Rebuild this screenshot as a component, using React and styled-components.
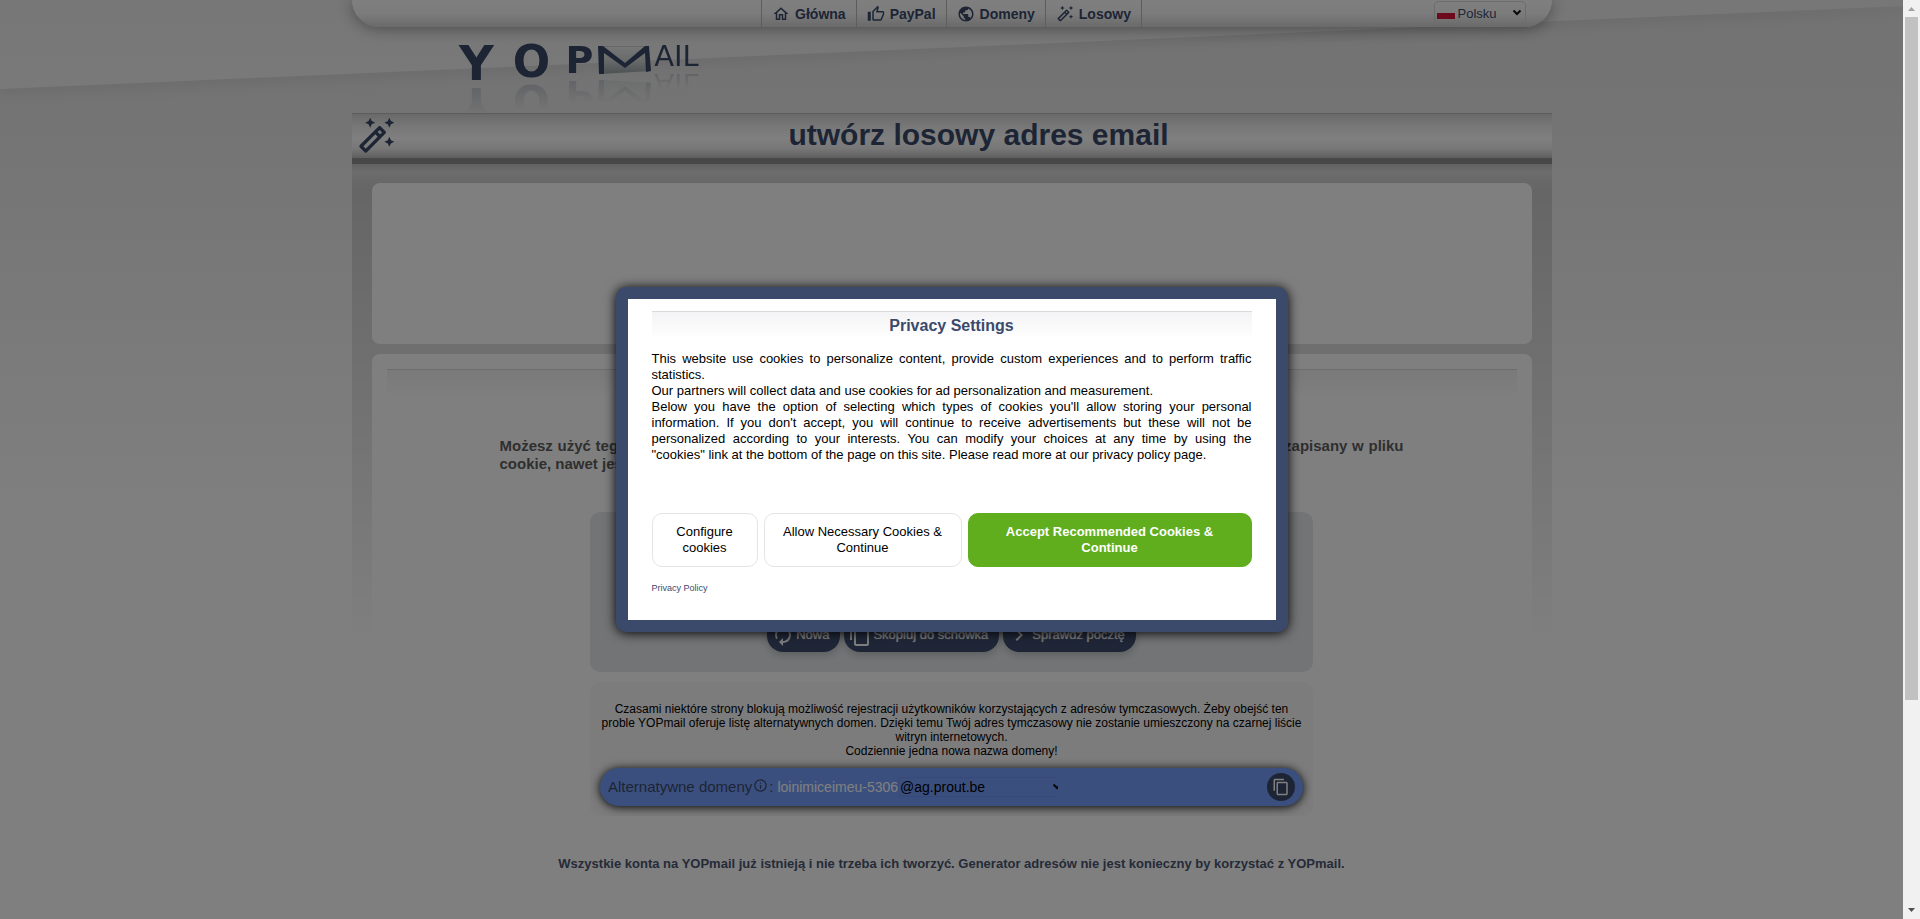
import React from "react";
import styled, { createGlobalStyle } from "styled-components";
import {
  MdAutorenew,
  MdChevronRight,
  MdContentCopy,
  MdInfoOutline,
  MdOutlineAutoFixHigh,
  MdOutlineHome,
  MdOutlineThumbUp,
  MdPublic,
} from "react-icons/md";

const navy = "#3b4a6b";

const GlobalStyle = createGlobalStyle`
  *, *::before, *::after { box-sizing: border-box; }
  body {
    margin: 0;
    font-family: "Liberation Sans", Arial, sans-serif;
    color: #000;
    overflow: hidden;
  }
  button, select { font-family: inherit; }
  p, h1, h2 { margin: 0; }
`;

const Window = styled.div`
  display: grid;
  grid-template-columns: minmax(0, 1fr) 17px;
  height: 100vh;
`;

const Page = styled.div`
  position: relative;
  isolation: isolate;
  display: flex;
  flex-direction: column;
  overflow: hidden;
  background: linear-gradient(#e6e6e6 0, #e8e8e8 110px, #fff 520px);
`;

const Slant = styled.div`
  position: absolute;
  inset: 0 0 auto;
  z-index: -1;
  filter: drop-shadow(0 6px 6px rgba(0, 0, 0, 0.06));

  &::before {
    content: "";
    display: block;
    height: 89px;
    background: linear-gradient(#eee, #f3f3f3);
    clip-path: polygon(0 0, 100% 0, 100% 6px, 0 100%);
  }
`;

const Column = styled.div`
  width: 100%;
  max-width: 1200px;
  margin: 0 auto;
  flex: 1;
  display: flex;
  flex-direction: column;
`;

const TopBar = styled.header`
  display: grid;
  grid-template-columns: 1fr auto 1fr;
  height: 27px;
  flex: none;
  padding: 0 26px;
  border-radius: 0 0 28px 28px;
  background: linear-gradient(#fff, #f8f8f8 50%, #d4d4d4);
  box-shadow: 0 1px 16px rgba(0, 0, 0, 0.4);
`;

const Nav = styled.nav`
  grid-column: 2;
  display: flex;
  border-left: 1px solid #bbb;
`;

const NavLink = styled.a`
  display: flex;
  align-items: center;
  gap: 5px;
  padding: 0 10px;
  border-right: 1px solid #bbb;
  color: ${navy};
  font-size: 14px;
  font-weight: bold;
  text-decoration: none;
`;

const Language = styled.label`
  justify-self: end;
  display: flex;
  align-items: center;
  width: 92px;
  height: 24px;
  margin-top: 1px;
  padding: 0 2px;
  border: 1px solid #dadada;
  border-radius: 4px;
`;

const Flag = styled.span`
  width: 18px;
  height: 12px;
  background: linear-gradient(transparent 50%, #dc143c 50%);
`;

const LanguageSelect = styled.select`
  flex: 1;
  min-width: 0;
  appearance: none;
  border: 0;
  padding: 0 0 0 3px;
  background: none;
  color: ${navy};
  font-size: 13px;
`;

const LogoLink = styled.a`
  display: flex;
  align-items: flex-start;
  height: 86px;
  flex: none;
  padding: 19px 0 0 100px;
  overflow: hidden;
  color: ${navy};
  text-decoration: none;
`;

const LogoPart = styled.span`
  display: block;
  width: ${(p) => p.$width}px;
  font-family: "DejaVu Sans", Verdana, sans-serif;
  font-size: ${(p) => p.$size}px;
  font-weight: ${(p) => (p.$light ? "normal" : "bold")};
  line-height: ${(p) => p.$height}px;
  height: ${(p) => p.$height}px;
  text-align: center;
  -webkit-box-reflect: below 6px
    linear-gradient(transparent 20%, rgba(0, 0, 0, 0.2));

  svg { display: block; }
`;

const TitleBar = styled.div`
  display: grid;
  grid-template-columns: 54px 1fr;
  align-items: center;
  height: 51px;
  flex: none;
  border-top: 1px solid #bbb;
  border-bottom: 6px solid #909090;
  background: linear-gradient(#d4d4d4, #f0f0f0 30%, #fff 55%, #f0f0f0 78%, #bebebe);
  color: ${navy};

  svg { margin-left: 4px; }
`;

const Title = styled.h1`
  padding-bottom: 2px;
  font-size: 30px;
  line-height: 34px;
  text-align: center;
`;

const Content = styled.main`
  flex: 1;
  display: flex;
  flex-direction: column;
  gap: 10px;
  padding: 19px 20px 0;
  background: linear-gradient(#c4c4c4 0, #dadada 8px, #d2d2d2 16px, #ccc 26px, #fff 482px);
`;

const AdSlot = styled.section`
  height: 161px;
  flex: none;
  border-radius: 8px;
  background: #fff;
`;

const Card = styled.section`
  flex: 1;
  display: flex;
  flex-direction: column;
  padding: 15px;
  border-radius: 8px 8px 0 0;
  background: #fff;
`;

const SectionHead = styled.h2`
  height: 25px;
  flex: none;
  border-top: 1px solid #d8dade;
  background: linear-gradient(#f4f4f6, #fdfdfd);
  color: ${navy};
  font-size: 16px;
  line-height: 27px;
  text-align: center;
`;

const Intro = styled.p`
  width: 100%;
  max-width: 904px;
  margin: 43px auto 39px;
  color: #5f5f5f;
  font-size: 15px;
  font-weight: bold;
  line-height: 18px;
  text-align: justify;
`;

const Panel = styled.div`
  width: 100%;
  max-width: 723px;
  margin: 0 auto 10px;
  border-radius: 10px;
`;

const AddressPanel = styled(Panel)`
  display: flex;
  align-items: flex-end;
  justify-content: center;
  gap: 4px;
  height: 160px;
  padding-bottom: 20px;
  background: #e6e9ed;
`;

const ActionButton = styled.button`
  display: flex;
  align-items: center;
  gap: 1px;
  height: 35px;
  padding: 0 11px 0 4px;
  border: 0;
  border-radius: 16px;
  background: linear-gradient(#4a5b82, ${navy});
  color: #fff;
  font-size: 13px;
  text-shadow: 0 0 1px #fff;
  box-shadow: 0 3px 8px rgba(0, 0, 0, 0.2);
`;

const DomainPanel = styled(Panel)`
  padding: 20px 10px 10px;
  background: #f8f8f8;
  text-align: center;
  font-size: 12px;
  line-height: 14px;
`;

const DomainBar = styled.div`
  display: flex;
  align-items: center;
  height: 38px;
  margin-top: 10px;
  padding: 0 8px;
  border-radius: 19px;
  background: #769fff;
  box-shadow: 0 1px 10px #000;
`;

const DomainLabel = styled.label`
  display: flex;
  align-items: center;
  gap: 1px;
  color: ${navy};
  font-size: 15px;

  svg { margin-bottom: 4px; }
`;

const Login = styled.span`
  padding: 0 0 0 4px;
  color: #fff;
  font-size: 14px;
`;

const DomainPicker = styled.span`
  display: flex;
  align-items: center;
  width: 160px;
  height: 20px;
  overflow: hidden;
  border: 1px solid #6c93f2;
  border-right: 0;
  border-radius: 4px 0 0 4px;

  svg { flex: none; margin-right: -5px; }
`;

const DomainSelect = styled.select`
  flex: 1;
  min-width: 0;
  appearance: none;
  border: 0;
  padding: 0 0 0 1px;
  background: none;
  color: #000;
  font-size: 14px;
`;

const RoundButton = styled.button`
  display: flex;
  align-items: center;
  justify-content: center;
  width: 28px;
  height: 28px;
  margin-left: auto;
  padding: 0;
  border: 0;
  border-radius: 50%;
  background: ${navy};
  color: #fff;
`;

const Closing = styled.p`
  margin-top: 30px;
  color: #4b5670;
  font-size: 13px;
  font-weight: bold;
  line-height: 16px;
  text-align: center;
`;

const Overlay = styled.div`
  position: absolute;
  inset: 0;
  display: flex;
  align-items: center;
  justify-content: center;
  background: rgba(0, 0, 0, 0.5);
`;

const Dialog = styled.div`
  width: 672px;
  max-width: 100%;
  padding: 12px 24px 25px;
  border: 12px solid ${navy};
  border-radius: 10px;
  background: #fff;
  background-clip: padding-box;
  box-shadow: 0 1px 12px #000;
`;

const DialogText = styled.div`
  margin: 15px 0 50px;
  font-size: 13px;
  line-height: 16px;
  text-align: justify;
`;

const Choices = styled.div`
  display: grid;
  grid-template-columns: 106fr 198fr 284fr;
  gap: 6px;
`;

const Choice = styled.button`
  height: 54px;
  padding: 0 ${(p) => (p.$primary ? 24 : 14)}px;
  border: 1px solid ${(p) => (p.$primary ? "#60ae1e" : "#e4e4e4")};
  border-radius: 10px;
  background: ${(p) => (p.$primary ? "#60ae1e" : "#fff")};
  color: ${(p) => (p.$primary ? "#fff" : "#000")};
  font-size: 13px;
  font-weight: ${(p) => (p.$primary ? "bold" : "normal")};
  line-height: 16px;
`;

const PolicyLink = styled.a`
  display: block;
  margin-top: 14px;
  color: ${navy};
  font-size: 9px;
  line-height: 14px;
  text-decoration: none;
`;

const ScrollTrack = styled.div`
  display: flex;
  flex-direction: column;
  align-items: center;
  background: #f1f1f1;
`;

const ScrollArrow = styled.svg`
  width: 17px;
  height: 17px;
  flex: none;
`;

const ScrollThumb = styled.div`
  width: 13px;
  height: 74.3%;
  margin-bottom: auto;
  background: #c1c1c1;
`;

const navItems = [
  { label: "Główna", Icon: MdOutlineHome },
  { label: "PayPal", Icon: MdOutlineThumbUp },
  { label: "Domeny", Icon: MdPublic },
  { label: "Losowy", Icon: MdOutlineAutoFixHigh },
];

const actions = [
  { label: "Nowa", Icon: MdAutorenew },
  { label: "Skopiuj do schowka", Icon: MdContentCopy },
  { label: "Sprawdź pocztę", Icon: MdChevronRight },
];

function Chevron() {
  return (
    <svg width="12" height="12" viewBox="0 0 12 12" aria-hidden="true">
      <path d="M2.500 3.500L6 7l3.500-3.500" fill="none" stroke="#111" strokeWidth="2" />
    </svg>
  );
}

function Envelope() {
  return (
    <svg width="54" height="28" viewBox="0 0 54 28" aria-hidden="true">
      <defs>
        <linearGradient id="paper" x1="0" y1="0" x2="0" y2="1">
          <stop offset="0" stopColor="#eeeeee" />
          <stop offset="0.5" stopColor="#d4d8d8" />
          <stop offset="1" stopColor="#98a2a2" />
        </linearGradient>
      </defs>
      <path d="M2 0h48l2 25-50 3z" fill="url(#paper)" />
      <path d="M4 0h44" stroke="#a8adb4" />
      <path
        d="M0 0h5L27 17 47 0h4l2 25-5 1-1-19-20 15L6 7v21H1z"
        fill={navy}
      />
    </svg>
  );
}

export default function App() {
  return (
    <Window>
      <GlobalStyle />
      <Page>
        <Slant />
        <Column>
          <TopBar>
            <Nav>
              {navItems.map(({ label, Icon }) => (
                <NavLink key={label} href="#">
                  <Icon size={18} />
                  {label}
                </NavLink>
              ))}
            </Nav>
            <Language>
              <Flag />
              <LanguageSelect aria-label="Język">
                <option>Polsku</option>
              </LanguageSelect>
              <Chevron />
            </Language>
          </TopBar>

          <LogoLink href="#" aria-label="YOPmail">
            <LogoPart $width={50} $size={48} $height={35}>Y</LogoPart>
            <LogoPart $width={60} $size={44} $height={32}>O</LogoPart>
            <LogoPart $width={36} $size={38} $height={28}>P</LogoPart>
            <LogoPart $width={54} $size={12} $height={28}>
              <Envelope />
            </LogoPart>
            <LogoPart $width={50} $size={29} $height={21} $light>AIL</LogoPart>
          </LogoLink>

          <TitleBar>
            <MdOutlineAutoFixHigh size={40} />
            <Title>utwórz losowy adres email</Title>
          </TitleBar>

          <Content>
            <AdSlot />
            <Card>
              <SectionHead />
              <Intro>
                Możesz użyć tego adresu, aby zarejestrować się na dowolnej
                stronie internetowej. Twój adres email zostanie zapisany w
                pliku cookie, nawet jeśli opuścisz tę stronę.
              </Intro>
              <AddressPanel>
                {actions.map(({ label, Icon }) => (
                  <ActionButton key={label} type="button">
                    <Icon size={24} />
                    {label}
                  </ActionButton>
                ))}
              </AddressPanel>
              <DomainPanel>
                <p>
                  Czasami niektóre strony blokują możliwość rejestracji
                  użytkowników korzystających z adresów tymczasowych. Żeby
                  obejść ten proble YOPmail oferuje listę alternatywnych domen.
                  Dzięki temu Twój adres tymczasowy nie zostanie umieszczony na
                  czarnej liście witryn internetowych.
                </p>
                <p>Codziennie jedna nowa nazwa domeny!</p>
                <DomainBar>
                  <DomainLabel htmlFor="domain">
                    Alternatywne domeny
                    <MdInfoOutline size={15} />:
                  </DomainLabel>
                  <Login>loinimiceimeu-5306</Login>
                  <DomainPicker>
                    <DomainSelect id="domain">
                      <option>@ag.prout.be</option>
                    </DomainSelect>
                    <Chevron />
                  </DomainPicker>
                  <RoundButton type="button" aria-label="Skopiuj">
                    <MdContentCopy size={18} />
                  </RoundButton>
                </DomainBar>
              </DomainPanel>
              <Closing>
                Wszystkie konta na YOPmail już istnieją i nie trzeba ich
                tworzyć. Generator adresów nie jest konieczny by korzystać z
                YOPmail.
              </Closing>
            </Card>
          </Content>
        </Column>

        <Overlay>
          <Dialog role="dialog" aria-labelledby="privacy-title">
            <SectionHead id="privacy-title">Privacy Settings</SectionHead>
            <DialogText>
              <p>
                This website use cookies to personalize content, provide custom
                experiences and to perform traffic statistics.
              </p>
              <p>
                Our partners will collect data and use cookies for ad
                personalization and measurement.
              </p>
              <p>
                Below you have the option of selecting which types of cookies
                you'll allow storing your personal information. If you don't
                accept, you will continue to receive advertisements but these
                will not be personalized according to your interests. You can
                modify your choices at any time by using the
                "cookies"&nbsp;link at the bottom of the page on this site.
                Please read more at our privacy policy page.
              </p>
            </DialogText>
            <Choices>
              <Choice type="button">Configure cookies</Choice>
              <Choice type="button">Allow Necessary Cookies &amp; Continue</Choice>
              <Choice type="button" $primary>
                Accept Recommended Cookies &amp; Continue
              </Choice>
            </Choices>
            <PolicyLink href="#">Privacy Policy</PolicyLink>
          </Dialog>
        </Overlay>
      </Page>

      <ScrollTrack aria-hidden="true">
        <ScrollArrow viewBox="0 0 17 17">
          <path d="M5 11h7L8.500 7z" fill="#a3a3a3" />
        </ScrollArrow>
        <ScrollThumb />
        <ScrollArrow viewBox="0 0 17 17">
          <path d="M5 6h7L8.500 10z" fill="#505050" />
        </ScrollArrow>
      </ScrollTrack>
    </Window>
  );
}
